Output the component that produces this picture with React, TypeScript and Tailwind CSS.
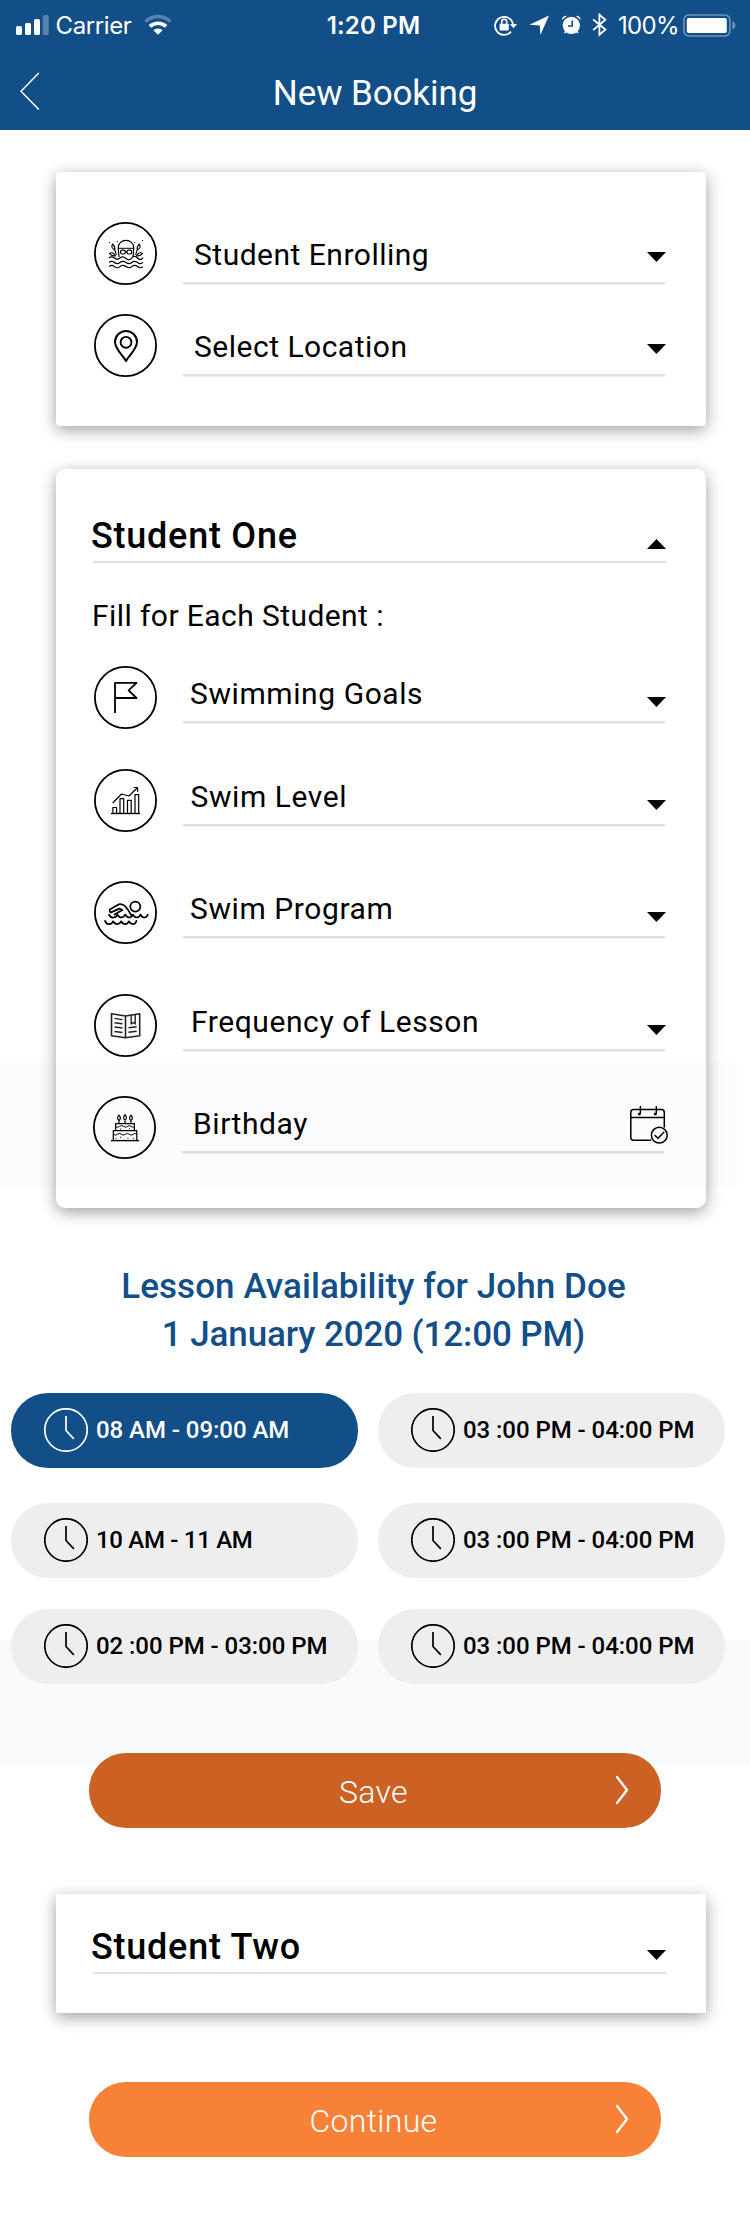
import type { ReactNode } from "react";

function StatusBar() {
  return (
    <div className="flex h-[50px] items-start pt-[12px] font-['Inter',sans-serif] text-[24px] leading-[28px] text-white">
      <div className="flex w-[312px] pl-[16px]">
        <svg width="33" height="28" viewBox="0 0 33 28" fill="#fff">
          <rect x="0" y="14" width="6" height="9" rx="1.6" />
          <rect x="9" y="11" width="6" height="12" rx="1.6" />
          <rect x="18" y="7" width="6" height="16" rx="1.6" />
          <rect x="26.7" y="3" width="6" height="20" rx="1.6" opacity="0.3" />
        </svg>
        <span className="ml-[6.5px] w-[77.5px] whitespace-nowrap font-normal tracking-[-0.4px]">Carrier</span>
        <svg className="ml-[11px]" width="28" height="28" viewBox="0 0 28 28" fill="none" stroke="#fff">
          <path d="M1.5 9.5 A18 18 0 0 1 26.5 9.5" strokeWidth="3.6" opacity="0.3" />
          <path d="M5.9 14.4 A11.8 11.8 0 0 1 22.1 14.4" strokeWidth="3.6" />
          <path d="M9.4 18.2 A6.8 6.8 0 0 1 18.6 18.2 L14 22.8 Z" fill="#fff" stroke="none" />
        </svg>
      </div>
      <div className="w-[123px] whitespace-nowrap text-center font-semibold tracking-[0.2px]">1:20 PM</div>
      <div className="flex pl-[59px]">
        <svg width="24" height="28" viewBox="0 0 24 28" fill="none" stroke="#fff" strokeWidth="1.8">
          <path d="M17 19.6 A9 9 0 1 1 19 12.6" />
          <path d="M15.8 12 H23.2 L19.5 16.2 Z" fill="#fff" stroke="none" />
          <rect x="5.6" y="11.8" width="9.2" height="6.6" rx="1" fill="#fff" stroke="none" />
          <path d="M7.7 12 V9.8 A2.5 2.5 0 0 1 12.7 9.8 V12" strokeWidth="1.6" />
        </svg>
        <svg className="ml-[11px]" width="20" height="28" viewBox="0 0 20 28" fill="#fff">
          <path d="M20 3.6 L11.4 23 L10.8 13.4 L0.5 12.8 Z" />
        </svg>
        <svg className="ml-[12px]" width="21" height="28" viewBox="0 0 21 28" fill="#fff">
          <circle cx="10.3" cy="13.3" r="8.6" />
          <path d="M0.8 8 A5 5 0 0 1 6 3.8 Z M19.8 8 A5 5 0 0 0 14.6 3.8 Z" />
          <path d="M11.2 8.4 V14 H7" fill="none" stroke="#124e88" strokeWidth="1.6" />
          <path d="M4.8 19.5 L3.8 21.2 M15.8 19.5 L16.8 21.2" stroke="#fff" strokeWidth="1.6" />
        </svg>
        <svg className="ml-[10px]" width="16" height="28" viewBox="0 0 16 28" fill="none" stroke="#fff" strokeWidth="1.8">
          <path d="M1.2 7.5 L13.4 17.6 L7.4 22.8 V2.6 L13.4 7.8 L1.2 18" />
        </svg>
        <span className="ml-[10px] w-[60px] whitespace-nowrap font-normal tracking-[-0.7px]">100%</span>
        <svg className="ml-[5px]" width="54" height="28" viewBox="0 0 54 28" fill="#fff">
          <rect x="0.9" y="3" width="46" height="21" rx="5" fill="none" stroke="#fff" strokeWidth="1.6" opacity="0.4" />
          <rect x="3.8" y="6" width="40" height="15" rx="2" />
          <path d="M49.4 9.5 Q52.4 10.5 52.4 13.3 Q52.4 16.2 49.4 17.4 Z" opacity="0.4" />
        </svg>
      </div>
    </div>
  );
}

function Header() {
  return (
    <header className="h-[130px] bg-[#124e88]">
      <StatusBar />
      <div className="flex pt-[22px]">
        <svg className="ml-[20px]" width="20" height="40" viewBox="0 0 20 40" fill="none" stroke="#fff" strokeWidth="1.5">
          <path d="M18.8 1 L1 19.3 L18.8 37.6" />
        </svg>
        <h1 className="mt-px w-[670px] text-center text-[35px] font-normal leading-[42px] tracking-[-0.1px] text-white">
          New Booking
        </h1>
      </div>
    </header>
  );
}

function RoundIcon({ children }: { children: ReactNode }) {
  return (
    <svg
      className="shrink-0"
      width="63"
      height="63"
      viewBox="0 0 63 63"
      fill="none"
      stroke="#000"
      strokeWidth="1.2"
      strokeLinejoin="round"
    >
      <circle cx="31.5" cy="31.5" r="30.6" strokeWidth="1.8" />
      {children}
    </svg>
  );
}

const SwimmerIcon = () => (
  <RoundIcon>
    <path d="M25 35 L24.3 27 V25.5 A7.7 7.2 0 0 1 39.7 25.5 V27 L39 35" />
    <path d="M24.3 26.3 H39.7" strokeWidth="1" />
    <rect x="26.6" y="28.2" width="4.6" height="3.8" rx="1.4" />
    <rect x="33" y="28.2" width="4.6" height="3.8" rx="1.4" />
    <path d="M31.2 29.6 H33" />
    <path d="M20.8 28 C18 26.5 17 24.5 18.6 22 C20.6 23.8 21.2 25.5 20.8 28 L22.4 33" strokeWidth="1.1" />
    <path d="M43.2 28 C46 26.5 47 24.5 45.4 22 C43.4 23.8 42.8 25.5 43.2 28 L41.6 33" strokeWidth="1.1" />
    <path d="M15.5 31.5 C18 29.8 20 31 21.5 34 C18.5 34.2 17 33.5 15.5 31.5 Z M48.5 31.5 C46 29.8 44 31 42.5 34 C45.5 34.2 47 33.5 48.5 31.5 Z" strokeWidth="1.1" />
    <path d="M15 35.7 Q17.8 33.7 20.5 36 T26 36 T32 36.5 T37.8 36 T43.5 36 T49 35.7" />
    <path d="M15 40.3 Q17.8 38.3 20.5 40.5 T26 40.5 T32 40.5 T37.8 40.5 T43.5 40.5 T49 40.3" />
    <path d="M15 44.6 Q17.8 42.3 20.5 44.6 T26 44.6 T32 44.6 T37.8 44.6 T43.5 44.6 T49 44.6" />
    <path d="M15 20.5 H16 M22.8 19.5 H23.8 M40.3 20.5 H41.3 M48 18.5 H49" />
  </RoundIcon>
);

const PinIcon = () => (
  <RoundIcon>
    <path d="M32 47 C29 41.5 21 35 21 28 A11 11 0 0 1 43 28 C43 35 35 41.5 32 47 Z" strokeWidth="2" />
    <circle cx="32" cy="28.3" r="5.4" strokeWidth="1.9" />
  </RoundIcon>
);

const FlagIcon = () => (
  <RoundIcon>
    <path d="M21 47 V16.8 H42.5 L34.6 24.3 L42.5 32 H21" strokeWidth="1.8" />
  </RoundIcon>
);

const ChartIcon = () => (
  <RoundIcon>
    <path d="M17 44.5 H46" strokeWidth="1.4" />
    <path d="M18.9 44.5 V38.5 H22.6 V44.5 M26 44.5 V29.7 H29.7 V44.5 M33.5 44.5 V31.3 H37.2 V44.5 M41 44.5 V25.7 H44.7 V44.5" />
    <path d="M18.7 34 L27.5 25 L35 27 L43.4 18.7 M39.6 18.5 H43.6 V22.8" />
  </RoundIcon>
);

const SwimIcon = () => (
  <RoundIcon>
    <circle cx="41.3" cy="25.6" r="5" strokeWidth="1.8" />
    <g strokeWidth="1.7" strokeLinecap="round">
      <path d="M17 31.4 C15.3 31 15 28.8 16.6 28 L25 23.3 C26.5 22.7 27.8 23.2 29 23.8 C32.5 25.2 34.5 30 37.5 34.5" />
      <path d="M17 31.4 L25.5 27.6 L28.4 29 L20.5 33.5" />
      <path d="M15 33.6 Q16.5 37 19.5 36.5 Q22.5 36.3 23.3 33.5 Q25 36.5 27.5 36.5 Q30 36.3 31.2 33.5 Q33 36.5 35.5 36.5 Q38 36.3 38.8 33.5 Q40.5 36.5 43 36.5 Q45.5 36.3 46.5 33.5 Q48 36.5 50.5 36.5 Q53 36.3 53.8 33.5" />
      <path d="M11 39.8 Q12.5 43.3 15.3 43.2 Q18 43 19 40.3 Q20.8 43.2 23.3 43.2 Q25.8 43 27 40.3 Q28.8 43.2 31.3 43.2 Q33.8 43 34.8 40.3 Q36.5 43.2 38.8 43.2 Q41.5 43 42.5 39.8" />
    </g>
  </RoundIcon>
);

const BookIcon = () => (
  <RoundIcon>
    <g stroke="#222">
      <path d="M17.5 19.8 L31.5 22 L45.7 19.8 V41.8 L31.5 43.8 L17.5 41.8 Z M31.5 22 V43.8" strokeWidth="1.6" />
      <path
        d="M20.5 24.4 L28.5 25.6 M20.5 28.7 L28.5 29.7 M20.5 33 L28.5 34 M20.5 37.5 L28.5 38.5 M34.5 33.7 L42.7 32.7 M34.5 38.2 L42.7 37.2"
        strokeWidth="1.4"
      />
      <path d="M37.2 21 V30 L39.2 28.5 L41.2 30 V20.5" strokeWidth="1.4" />
    </g>
  </RoundIcon>
);

const CakeIcon = () => (
  <RoundIcon>
    <path d="M18 44.6 H46" strokeWidth="1.4" />
    <path d="M20.3 44.5 V34.6 H43.8 V44.5 M22.6 34.5 V27.6 H41.4 V34.5" />
    <path
      d="M20.3 38.3 Q22.3 40 24.3 38.3 T28.3 38.3 T32.3 38.3 T36.3 38.3 T40.3 38.3 T43.8 38.3 M22.6 30.6 Q24.5 32 26.5 30.4 T30.5 30.4 T34.5 30.4 T38 30.4 T41.4 30.6"
      strokeWidth="1"
    />
    <path d="M26 27.5 V24.5 M32 27.5 V24.5 M38 27.5 V24.5" />
    <path d="M26 24.5 C23.8 23 24.5 20.8 26 19.2 C27.5 20.8 28.2 23 26 24.5 Z M32 24 C29.8 22.5 30.5 20.2 32 18.6 C33.5 20.2 34.2 22.5 32 24 Z M38 24.5 C35.8 23 36.5 20.8 38 19.2 C39.5 20.8 40.2 23 38 24.5 Z" />
    <path d="M22.5 42.4 H23.5 M27 41.4 H28 M34.5 42 H35.5 M40 42.4 H41 M27 33 H28 M36 32.8 H37" strokeWidth="1" />
  </RoundIcon>
);

const CalendarIcon = () => (
  <svg width="38" height="38" viewBox="0 0 38 38" fill="none" stroke="#000" strokeWidth="1.5" strokeLinecap="round">
    <path d="M20.5 34.2 H3.5 Q0.8 34.2 0.8 31.5 V6.5 Q0.8 3.6 3.5 3.6 H31.5 Q34.3 3.6 34.3 6.5 V21" />
    <path d="M0.8 11.6 H34.3" />
    <path d="M10.4 0.7 V6.5 Q10.4 8 9.2 8.3 M26.3 0.7 V6.5 Q26.3 8 25.1 8.3" />
    <circle cx="9.2" cy="8" r="1" fill="#000" strokeWidth="0.8" />
    <circle cx="25.1" cy="8" r="1" fill="#000" strokeWidth="0.8" />
    <circle cx="29.3" cy="29.2" r="7.9" />
    <path d="M25 29.5 L28 32.3 L33.8 26.3" />
  </svg>
);

function Caret({ up = false }: { up?: boolean }) {
  return (
    <svg width="19" height="10" viewBox="0 0 19 10" fill="#000">
      <path d={up ? "M0 10 L9.5 0 L19 10 Z" : "M0 0 H19 L9.5 10 Z"} />
    </svg>
  );
}

const cardShadow = "bg-white shadow-[0_4px_16px_rgba(0,0,0,0.38)]";

function Underline() {
  return <div className="h-[3px] border-b border-[#efefef] bg-[#e0e0e0]" />;
}

function TopField({ icon, label }: { icon: ReactNode; label: string }) {
  return (
    <div className="flex h-[63px] gap-[26px] pl-[38px]">
      {icon}
      <div className="flex w-[483px] flex-col justify-between">
        <div className="flex justify-between pl-[11px] pt-[15px]">
          <span className="text-[30px] leading-[36px] tracking-[0.5px]">{label}</span>
          <div className="pt-[15px]">
            <Caret />
          </div>
        </div>
        <div className="w-[482px]">
          <Underline />
        </div>
      </div>
    </div>
  );
}

function StudentField({
  icon,
  label,
  className,
  pad,
  action,
}: {
  icon: ReactNode;
  label: string;
  className: string;
  pad: string;
  action?: ReactNode;
}) {
  return (
    <div className={`flex h-[63px] gap-[26px] ${className}`}>
      {icon}
      <div className="flex h-[58px] w-[483px] flex-col justify-between">
        <div className={`flex h-[46px] justify-between pt-[10px] ${pad}`}>
          <span className="text-[30px] leading-[36px] tracking-[0.58px]">{label}</span>
          {action ?? (
            <div className="pt-[21px]">
              <Caret />
            </div>
          )}
        </div>
        <div className="w-[482px]">
          <Underline />
        </div>
      </div>
    </div>
  );
}

function StudentTitle({ name, up }: { name: string; up?: boolean }) {
  return (
    <div className="ml-[35px] w-[575px]">
      <div className="flex h-[46px] justify-between">
        <h2 className="text-[36px] font-medium leading-[42px] tracking-[0.75px]">{name}</h2>
        <div className="pt-[24px]">
          <Caret up={up} />
        </div>
      </div>
      <div className="ml-[2px] h-[2px] w-[573px] bg-[#e0e0e0]" />
    </div>
  );
}

function Slot({
  label,
  active = false,
  tracking = "tracking-[-0.05px]",
}: {
  label: string;
  active?: boolean;
  tracking?: string;
}) {
  return (
    <button
      className={`flex h-[75px] w-[347px] rounded-[37px] pl-[33px] pt-[15px] ${
        active ? "bg-[#124e88] text-white" : "bg-[#eeeeee] text-black"
      }`}
    >
      <svg width="44" height="44" viewBox="0 0 44 44" fill="none" stroke="currentColor" strokeWidth="1.7">
        <circle cx="22" cy="22" r="21.2" />
        <path d="M22 8 V22.5 L29.8 30.8" />
      </svg>
      <span className={`ml-[8px] mt-[8px] whitespace-nowrap text-[24px] font-medium leading-[28px] ${tracking}`}>
        {label}
      </span>
    </button>
  );
}

function ActionButton({ label, className }: { label: string; className: string }) {
  return (
    <button className={`ml-[89px] flex h-[75px] w-[572px] rounded-[37px] text-white ${className}`}>
      <span className="ml-[142px] mt-[19.5px] w-[285px] text-center text-[32px] font-light leading-[38px] tracking-[0.3px]">
        {label}
      </span>
      <svg
        className="ml-[99px] mt-[22px]"
        width="15"
        height="30"
        viewBox="0 0 15 30"
        fill="none"
        stroke="#fff"
        strokeWidth="2.3"
        strokeLinecap="round"
        strokeLinejoin="round"
      >
        <path d="M2 2 L12 15 L2 28" />
      </svg>
    </button>
  );
}

export default function App() {
  return (
    <div className="relative h-[2214px] w-[750px] overflow-hidden bg-white font-['Roboto',sans-serif] text-black">
      <Header />

      <section className={`ml-[56px] mt-[42px] flex h-[254px] w-[650px] flex-col gap-[29px] rounded-[4px] pt-[50px] ${cardShadow}`}>
        <TopField icon={<SwimmerIcon />} label="Student Enrolling" />
        <TopField icon={<PinIcon />} label="Select Location" />
      </section>

      <section className={`ml-[56px] mt-[43px] h-[739px] w-[650px] rounded-[9px] pt-[46px] ${cardShadow}`}>
        <StudentTitle name="Student One" up />
        <p className="ml-[36px] mt-[35px] text-[30px] leading-[36px] tracking-[0.42px]">Fill for Each Student :</p>
        <StudentField className="mt-[32px] pl-[38px]" pad="pl-[7px]" icon={<FlagIcon />} label="Swimming Goals" />
        <StudentField className="mt-[40px] pl-[38px]" pad="pl-[7.5px]" icon={<ChartIcon />} label="Swim Level" />
        <StudentField className="mt-[49px] pl-[38px]" pad="pl-[7px]" icon={<SwimIcon />} label="Swim Program" />
        <StudentField className="mt-[50px] pl-[38px]" pad="pl-[8px]" icon={<BookIcon />} label="Frequency of Lesson" />
        <StudentField
          className="mt-[39px] pl-[37px]"
          pad="pl-[11px]"
          icon={<CakeIcon />}
          label="Birthday"
          action={
            <div className="-mr-[3px]">
              <CalendarIcon />
            </div>
          }
        />
      </section>
      <div className="pointer-events-none absolute left-0 top-[1062px] h-[126px] w-[737px] bg-[rgba(20,20,190,0.0125)]" />

      <h2 className="mt-[55px] w-[747px] text-center text-[35px] font-medium leading-[48px] text-[#124e88]">
        <span className="tracking-[0.07px]">Lesson Availability for John Doe</span>
        <br />
        <span className="tracking-[-0.12px]">1 January 2020 (12:00 PM)</span>
      </h2>

      <div className="mt-[34px] flex gap-[20px] pl-[11px]">
        <Slot label="08 AM - 09:00 AM" active />
        <Slot label="03 :00 PM - 04:00 PM" />
      </div>
      <div className="mt-[35px] flex gap-[20px] pl-[11px]">
        <Slot label="10 AM - 11 AM" tracking="tracking-[-0.3px]" />
        <Slot label="03 :00 PM - 04:00 PM" />
      </div>
      <div className="mt-[31px] h-[157px] bg-[linear-gradient(#ffffff_31px,#f9fafc_31px)]">
        <div className="flex gap-[20px] pl-[11px]">
          <Slot label="02 :00 PM - 03:00 PM" />
          <Slot label="03 :00 PM - 04:00 PM" />
        </div>
        <div className="pt-[69px]">
          <ActionButton label="Save" className="bg-[#cb6122]" />
        </div>
      </div>

      <section className={`ml-[56px] mt-[128px] h-[119px] w-[650px] rounded-[2px] pt-[32px] ${cardShadow}`}>
        <StudentTitle name="Student Two" />
      </section>

      <div className="mt-[69px]">
        <ActionButton label="Continue" className="bg-[#f68137]" />
      </div>
    </div>
  );
}
